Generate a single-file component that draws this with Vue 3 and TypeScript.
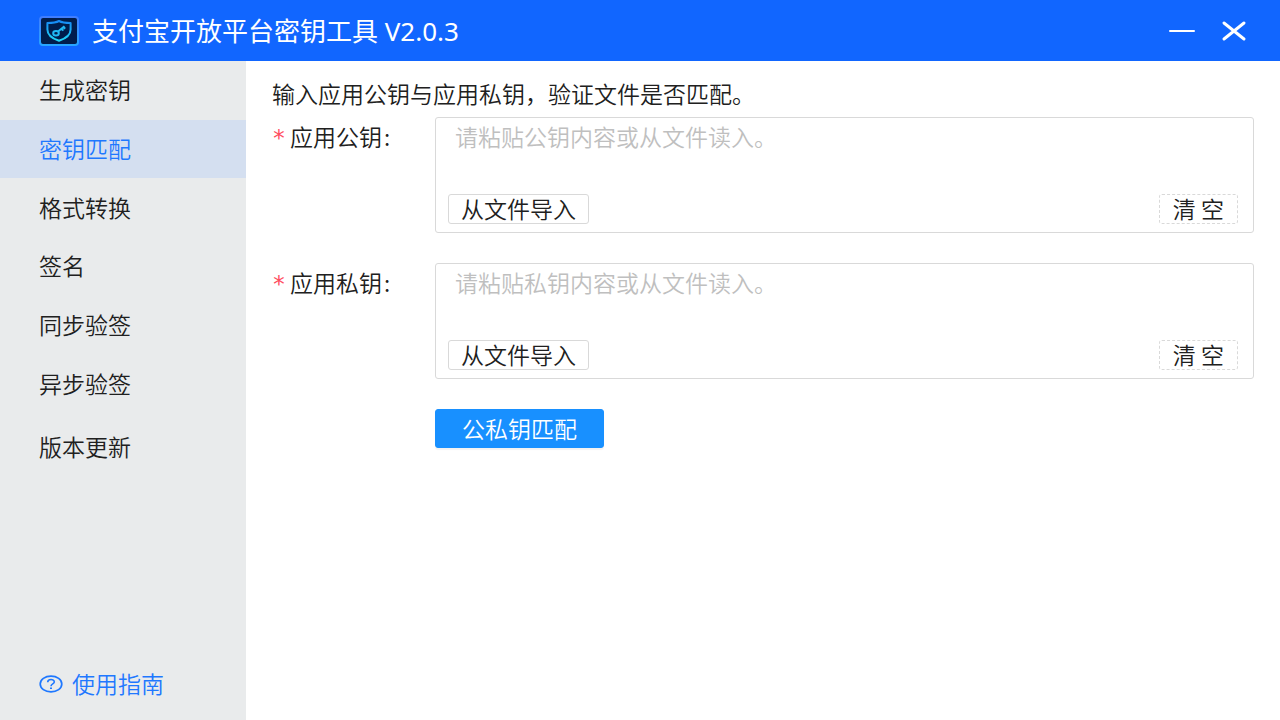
<script setup lang="ts">
import { ref } from 'vue'

interface KeyField {
  id: string
  label: string
  placeholder: string
  value: string
}

const tools: string[] = ['生成密钥', '密钥匹配', '格式转换', '签名', '同步验签', '异步验签']
const update = '版本更新'
const active = ref('密钥匹配')

const fields = ref<KeyField[]>([
  { id: 'public-key', label: '应用公钥', placeholder: '请粘贴公钥内容或从文件读入。', value: '' },
  { id: 'private-key', label: '应用私钥', placeholder: '请粘贴私钥内容或从文件读入。', value: '' },
])
</script>

<template>
  <div class="app">
    <header class="titlebar">
      <svg class="logo" viewBox="0 0 40 30" aria-hidden="true">
        <defs>
          <linearGradient id="frame" x1="0" y1="0" x2="0" y2="1">
            <stop offset="0" stop-color="#3f7dff" />
            <stop offset="1" stop-color="#27a5ff" />
          </linearGradient>
          <linearGradient id="shield" x1="0" y1="0" x2="0" y2="1">
            <stop offset="0" stop-color="#1689f5" />
            <stop offset="1" stop-color="#20d8f8" />
          </linearGradient>
        </defs>
        <rect x="1" y="1" width="38" height="28" rx="3" fill="#001d4c" stroke="url(#frame)" stroke-width="2" />
        <path d="M20 5C17 6.600 13 7 8.400 7.100V13.500C8.400 19 13.500 22.600 20 24.800C26.500 22.600 31.600 19 31.600 13.500V7.100C27 7 23 6.600 20 5Z" fill="none" stroke="url(#shield)" stroke-width="2" stroke-linejoin="round" />
        <g fill="none" stroke="#20b9f5" stroke-width="2">
          <ellipse cx="17" cy="17.200" rx="2.800" ry="2.200" />
          <path d="M19 15.500L25.500 10.200M22 13L24.500 14.500M24 11.200L26.300 12.700" />
        </g>
      </svg>
      <h1 class="title">支付宝开放平台密钥工具 V2.0.3</h1>
      <div class="controls">
        <button type="button" class="control" aria-label="最小化">
          <svg viewBox="0 0 28 24"><path d="M2 12H26" stroke-width="2" /></svg>
        </button>
        <button type="button" class="control" aria-label="关闭">
          <svg viewBox="0 0 28 24"><path d="M4 4L24 20M24 4L4 20" stroke-width="3" /></svg>
        </button>
      </div>
    </header>

    <div class="body">
      <nav class="sidebar">
        <div>
          <ul class="menu">
            <li v-for="item in tools" :key="item">
              <button
                type="button"
                class="menu-item"
                :class="{ active: item === active }"
                @click="active = item"
              >{{ item }}</button>
            </li>
          </ul>
          <button
            type="button"
            class="menu-item update"
            :class="{ active: update === active }"
            @click="active = update"
          >{{ update }}</button>
        </div>
        <a class="guide" href="#guide">
          <svg viewBox="0 0 24 18" aria-hidden="true">
            <ellipse cx="12" cy="9" rx="10.800" ry="7.900" stroke-width="1.700" />
            <path d="M8.700 7.200C8.700 3.700 15.300 3.700 15.300 7C15.300 9 12 8.900 12 11.200" stroke-width="1.600" />
            <path d="M12 12.400V14" stroke-width="2" />
          </svg>
          <span>使用指南</span>
        </a>
      </nav>

      <main class="content">
        <p class="intro">输入应用公钥与应用私钥，验证文件是否匹配。</p>
        <form class="form" @submit.prevent>
          <div v-for="field in fields" :key="field.id" class="row">
            <label class="label" :for="field.id"><span class="star">*</span>{{ field.label }}<span class="colon">:</span></label>
            <div class="box">
              <textarea :id="field.id" v-model="field.value" class="input" :placeholder="field.placeholder"></textarea>
              <div class="actions">
                <button type="button" class="small">从文件导入</button>
                <button type="button" class="small dashed" @click="field.value = ''">清 空</button>
              </div>
            </div>
          </div>
          <button type="submit" class="primary">公私钥匹配</button>
        </form>
      </main>
    </div>
  </div>
</template>

<style>
body {
  margin: 0;
}
</style>

<style scoped>
.app {
  display: flex;
  flex-direction: column;
  min-height: 100vh;
  background: #fff;
  color: #202020;
  font-family: "Noto Sans CJK SC", sans-serif;
  font-size: 23px;
  font-weight: 350;
  line-height: 30px;
}
.app * {
  box-sizing: border-box;
}
button,
textarea {
  font: inherit;
  color: inherit;
}
button {
  cursor: pointer;
}
.titlebar {
  display: flex;
  align-items: center;
  height: 61px;
  padding: 0 32px 0 39px;
  background: #1166ff;
  color: #fff;
}
.logo {
  width: 40px;
  height: 30px;
}
.title {
  margin: 0 0 0 13px;
  font-family: "Noto Sans", "Noto Sans CJK SC", sans-serif;
  font-size: 26px;
  font-weight: 400;
  line-height: 36px;
  white-space: nowrap;
}
.controls {
  display: flex;
  gap: 24px;
  margin-left: auto;
}
.control {
  width: 28px;
  height: 24px;
  padding: 0;
  border: 0;
  background: none;
}
.control svg {
  display: block;
  fill: none;
  stroke: #fff;
  stroke-linecap: round;
}
.body {
  display: flex;
  flex: 1;
}
.sidebar {
  display: flex;
  flex: 0 0 246px;
  flex-direction: column;
  justify-content: space-between;
  background: #e9ebec;
}
.menu {
  display: grid;
  grid-auto-rows: 1fr;
  height: 352px;
  margin: 0;
  padding: 0;
  list-style: none;
}
.menu-item {
  display: block;
  width: 100%;
  height: 100%;
  padding: 0 39px 2px;
  border: 0;
  background: none;
  text-align: left;
}
.menu-item.active {
  background: #d4dff0;
  color: #1f78ff;
}
.menu-item.update {
  height: 58px;
  margin-top: 5px;
}
.guide {
  display: flex;
  align-items: center;
  gap: 9px;
  padding: 0 39px 20px;
  color: #1f78ff;
  text-decoration: none;
}
.guide svg {
  width: 24px;
  height: 18px;
  fill: none;
  stroke: currentColor;
}
.guide span {
  padding-bottom: 2px;
}
.content {
  flex: 1;
  min-width: 0;
  padding: 17px 26px;
}
.intro {
  margin: 0 0 9px;
}
.row {
  display: flex;
  margin-bottom: 30px;
}
.label {
  flex: 0 0 163px;
  padding-top: 4px;
  white-space: nowrap;
}
.star {
  display: inline-block;
  width: 18px;
  color: #ff4d5f;
  font-family: "DejaVu Sans Mono", monospace;
  line-height: 24px;
}
.colon {
  margin-left: 2px;
}
.box {
  flex: 1;
  min-width: 0;
  border: 1px solid #d9d9d9;
  border-radius: 3px;
}
.box:focus-within {
  border-color: #1890ff;
}
.input {
  display: block;
  width: 100%;
  height: 76px;
  padding: 3px 19px;
  border: 0;
  outline: 0;
  background: none;
  resize: none;
}
.input::placeholder {
  color: #bfbfbf;
  opacity: 1;
}
.actions {
  display: flex;
  justify-content: space-between;
  padding: 0 15px 8px 12px;
}
.small {
  height: 30px;
  padding: 0 12px 2px;
  border: 1px solid #d9d9d9;
  border-radius: 3px;
  background: #fff;
  line-height: 26px;
}
.dashed {
  padding: 0 13px 2px;
  border-style: dashed;
}
.primary {
  display: block;
  height: 39px;
  margin-left: 163px;
  padding: 0 26px 2px;
  border: 1px solid #1890ff;
  border-radius: 3px;
  background: #1890ff;
  box-shadow: 0 2px 1px rgba(0, 0, 0, 0.05);
  color: #fff;
}
</style>
